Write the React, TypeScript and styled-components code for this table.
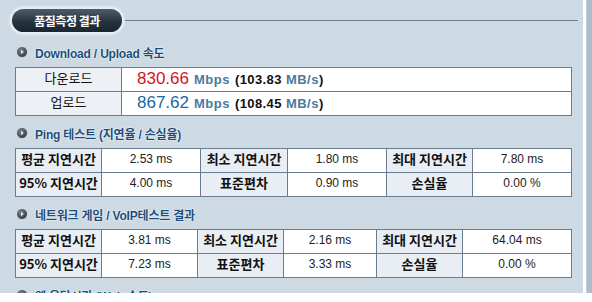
import React from 'react';
import styled, {createGlobalStyle} from 'styled-components';

const GlobalStyle = createGlobalStyle`
  body {
    margin: 0;
    background: #fff;
    font-family: "Liberation Sans", "Noto Sans CJK KR", sans-serif;
  }
`;

const Page = styled.div`
  display: flex;
  align-items: flex-start;
  width: 592px;
  height: 302px;
  background: #fff;
`;

const Panel = styled.div`
  width: 583px;
  height: 293px;
  background: #cedae3;
  overflow: hidden;
`;

const ScrollTrack = styled.div`
  margin-left: 3px;
  width: 6px;
  height: 293px;
  background: #aebdca;
  border-left: 1px solid #c3cfd9;
  box-sizing: border-box;
`;

const TitleBar = styled.div`
  display: flex;
  align-items: center;
  padding: 9px 5px 0 12px;
`;

const Pill = styled.div`
  width: 110px;
  height: 23px;
  border-radius: 12px;
  background: linear-gradient(#4d5d68, #26343e 55%, #1a262f);
  box-shadow: 0 0 0 2px #e7eef2, 0 0 2px 3px rgba(255, 255, 255, 0.35);
  color: #fff;
  font-family: "Noto Sans CJK KR", sans-serif;
  font-weight: bold;
  font-size: 12px;
  letter-spacing: -0.5px;
  line-height: 23px;
  text-align: center;
`;

const Rule = styled.div`
  flex: 1;
  height: 1px;
  margin-left: 3px;
  background: #6b8094;
`;

const Section = styled.section<{ $top: number }>`
  margin-top: ${p => p.$top}px;
  padding: 0 15px;
`;

const Heading = styled.h3`
  display: flex;
  align-items: center;
  gap: 7px;
  height: 18px;
  margin: 0 0 6px 1px;
  font-size: 12px;
  font-weight: bold;
  letter-spacing: -0.2px;
  color: #1c4d7a;
  text-shadow: 0 0 2px #fff, 0 0 1px #fff;
`;

const Grid = styled.div<{ $cols: string }>`
  display: grid;
  grid-template-columns: ${p => p.$cols};
  grid-auto-rows: 23px;
  gap: 1px;
  width: 557px;
  box-sizing: border-box;
  background: #6a7d90;
  border: 1px solid #6a7d90;
`;

const Label = styled.div<{ $plain?: boolean }>`
  background: ${p => (p.$plain ? '#edf1f5' : '#e8eef3')};
  color: #111;
  font-family: "Noto Sans CJK KR", sans-serif;
  font-size: 13px;
  font-weight: ${p => (p.$plain ? 'normal' : 'bold')};
  line-height: 20px;
  text-align: center;
  white-space: nowrap;
  overflow: hidden;
`;

const Value = styled.div`
  background: #fff;
  color: #222;
  font-size: 12px;
  line-height: 20px;
  text-align: center;
`;

const SpeedCell = styled.div`
  display: flex;
  align-items: baseline;
  gap: 5px;
  padding-left: 15px;
  background: #fff;
  line-height: 22px;
`;

const Speed = styled.span<{ $color: string }>`
  font-size: 17px;
  color: ${p => p.$color};
`;

const Unit = styled.span`
  font-size: 13px;
  font-weight: bold;
  letter-spacing: 0.5px;
  color: #4b7a9d;
`;

const Bytes = styled.span`
  font-size: 13px;
  font-weight: bold;
  letter-spacing: 0.4px;
  color: #111;
`;

const Bullet = () => (
  <svg width="12" height="12" viewBox="0 0 12 12">
    <defs>
      <radialGradient id="bg" cx="40%" cy="35%" r="70%">
        <stop offset="0" stopColor="#7a858c" />
        <stop offset="1" stopColor="#2b3338" />
      </radialGradient>
    </defs>
    <circle cx="6" cy="6" r="5.5" fill="url(#bg)" stroke="#e6ecf0" strokeWidth="0.8" />
    <path d="M5 3.8 L7.8 6 L5 8.2 Z" fill="#dfe6ea" />
  </svg>
);

type Row = [string, string, string, string, string, string];

const LatencyTable = ({cols, rows}: { cols: string; rows: Row[] }) => (
  <Grid $cols={cols}>
    {rows.map(r =>
      r.map((c, i) => (i % 2 === 0
        ? <Label key={r[0] + i}>{c}</Label>
        : <Value key={r[0] + i}>{c}</Value>))
    )}
  </Grid>
);

const speeds = [
  {label: '다운로드', mbps: '830.66', mb: '103.83', color: '#d3151b'},
  {label: '업로드', mbps: '867.62', mb: '108.45', color: '#1868a4'},
];

const pingRows: Row[] = [
  ['평균 지연시간', '2.53 ms', '최소 지연시간', '1.80 ms', '최대 지연시간', '7.80 ms'],
  ['95% 지연시간', '4.00 ms', '표준편차', '0.90 ms', '손실율', '0.00 %'],
];

const gameRows: Row[] = [
  ['평균 지연시간', '3.81 ms', '최소 지연시간', '2.16 ms', '최대 지연시간', '64.04 ms'],
  ['95% 지연시간', '7.23 ms', '표준편차', '3.33 ms', '손실율', '0.00 %'],
];

export default function App() {
  return (
    <Page>
      <GlobalStyle />
      <Panel>
        <TitleBar>
          <Pill>품질측정 결과</Pill>
          <Rule />
        </TitleBar>

        <Section $top={11}>
          <Heading><Bullet />Download / Upload 속도</Heading>
          <Grid $cols="105px 449px">
            {speeds.map(s => (
              <React.Fragment key={s.label}>
                <Label $plain>{s.label}</Label>
                <SpeedCell>
                  <Speed $color={s.color}>{s.mbps}</Speed>
                  <Unit>Mbps</Unit>
                  <Bytes>({s.mb} <Unit>MB/s</Unit>)</Bytes>
                </SpeedCell>
              </React.Fragment>
            ))}
          </Grid>
        </Section>

        <Section $top={8}>
          <Heading><Bullet />Ping 테스트 (지연율 / 손실율)</Heading>
          <LatencyTable cols="85px 98px 86px 98px 85px 98px" rows={pingRows} />
        </Section>

        <Section $top={8}>
          <Heading><Bullet />네트워크 게임 / VoIP테스트 결과</Heading>
          <LatencyTable cols="85px 95px 85px 92px 85px 108px" rows={gameRows} />
        </Section>

        <Section $top={8}>
          <Heading><Bullet />웹 응답시간 (Web 속도)</Heading>
        </Section>
      </Panel>
      <ScrollTrack />
    </Page>
  );
}
